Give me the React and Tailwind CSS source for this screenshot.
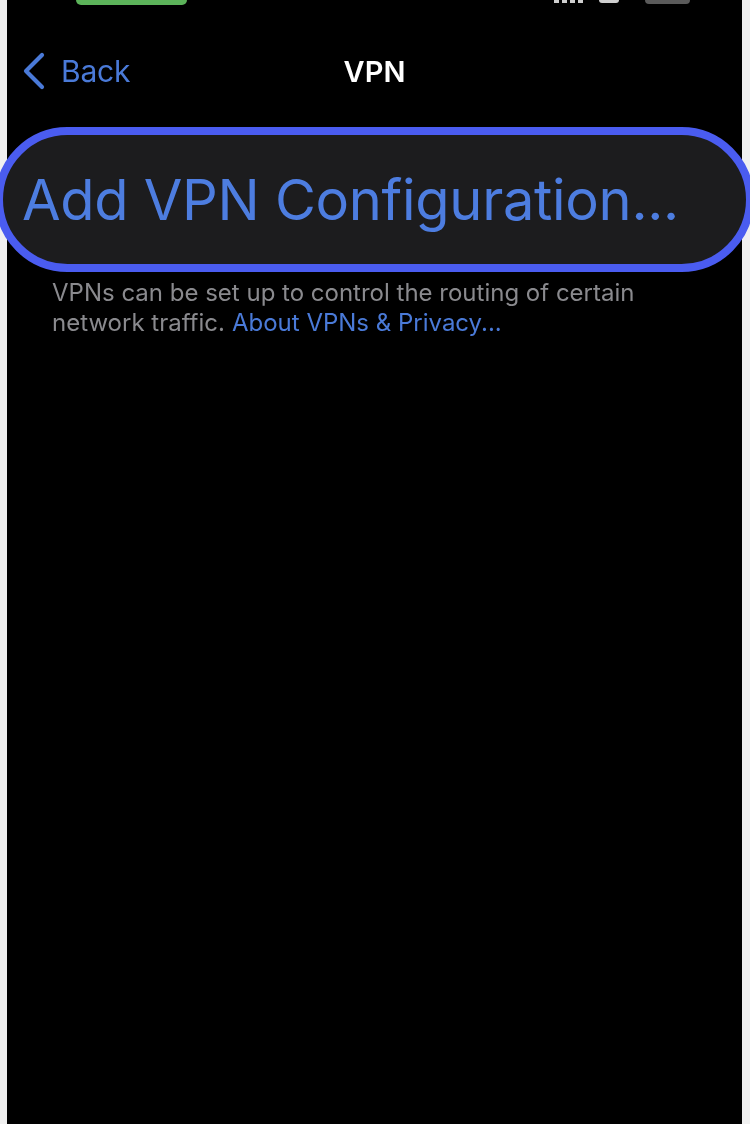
export default function App() {
  return (
    <div className="w-[750px] h-[1124px] bg-[#f0f0f0] pl-[7px] pr-[8px] overflow-hidden" style={{ fontFamily: 'Inter, "Noto Sans", sans-serif' }}>
      <div className="h-full bg-black flex flex-col">
        {/* status bar remnants */}
        <div className="h-[6px] relative flex">
          <div className="ml-[69px] w-[111px] h-[5px] rounded-b-full bg-[#5cb35a] blur-[0.6px]" />
          <div className="ml-auto mr-[52px] flex items-start gap-[6px] blur-[0.6px]">
            <div className="flex gap-[3px]">
              <div className="w-[5px] h-[3px] bg-[#cfcfcf]" />
              <div className="w-[5px] h-[3px] bg-[#cfcfcf]" />
              <div className="w-[5px] h-[3px] bg-[#cfcfcf]" />
              <div className="w-[5px] h-[3px] bg-[#cfcfcf]" />
            </div>
            <div className="w-[20px] h-[3px] rounded-b-full bg-[#cfcfcf] ml-[10px]" />
            <div className="w-[45px] h-[4px] rounded-b-md bg-[#5a5a5a] ml-[20px]" />
          </div>
        </div>
        {/* nav bar */}
        <div className="h-[121px] pt-[46px]">
          <div className="relative h-[38px] flex items-center">
            <div className="flex items-center ml-[14px] blur-[0.4px]">
              <svg width="26" height="38" viewBox="0 0 26 38">
                <path d="M21 3 L5 19 L21 35" fill="none" stroke="#4a7ad8" strokeWidth="4.2" strokeLinecap="round" strokeLinejoin="round" />
              </svg>
              <span className="ml-[14px] text-[30px] text-[#4a7ad8] leading-none tracking-[-0.2px]">Back</span>
            </div>
            <div className="absolute inset-0 flex items-center justify-center pointer-events-none">
              <span className="text-[29px] font-semibold text-white leading-none blur-[0.3px]">VPN</span>
            </div>
          </div>
        </div>
        {/* magnified pill */}
        <div className="mx-[-12px] h-[145px] rounded-full border-[8px] border-[#4a5cf0] bg-[#1c1c1e] flex items-center pl-[19px] blur-[0.5px]">
          <span className="text-[56px] text-[#4d7de0] leading-none tracking-[-0.3px]">Add VPN Configuration...</span>
        </div>
        {/* footer */}
        <div className="pl-[45px] pr-[40px] pt-[6px] text-[24px] leading-[30px] text-[#8a8a8e] blur-[0.4px] flex flex-col">
          <p>VPNs can be set up to control the routing of certain</p>
          <p className="flex gap-[7px]">
            <span>network traffic.</span>
            <span className="text-[#4a7ad8]">About VPNs &amp; Privacy...</span>
          </p>
        </div>
      </div>
    </div>
  );
}
